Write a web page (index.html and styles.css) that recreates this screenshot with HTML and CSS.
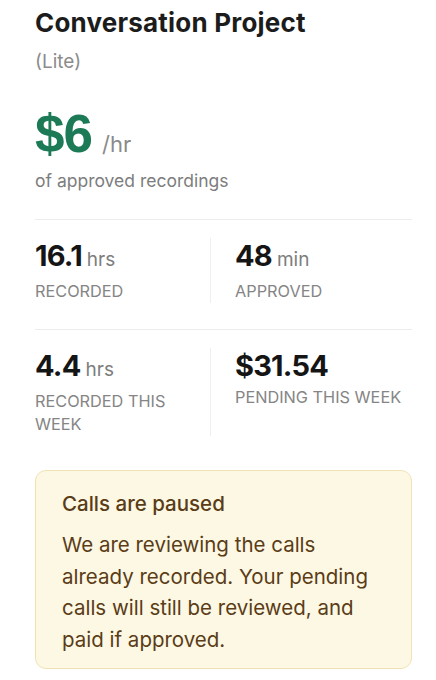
FILE: index.html
```html
<!DOCTYPE html>
<html>
<head>
    <title>Conversation Project</title>
    <link rel="stylesheet" href="styles.css">
</head>
<body>
    <div class="page">
        <h1 class="title">Conversation Project</h1>
        <div class="tier">(Lite)</div>

        <div class="rate">
            <span class="rate-value">$6</span>
            <span class="rate-unit">/hr</span>
        </div>
        <div class="rate-note">of approved recordings</div>

        <div class="stats">
            <div class="stat">
                <div class="stat-value">16.1<span class="unit">hrs</span></div>
                <div class="stat-label">RECORDED</div>
            </div>
            <div class="stat">
                <div class="stat-value">48<span class="unit">min</span></div>
                <div class="stat-label">APPROVED</div>
            </div>
        </div>

        <div class="stats last">
            <div class="stat">
                <div class="stat-value">4.4<span class="unit">hrs</span></div>
                <div class="stat-label">RECORDED THIS WEEK</div>
            </div>
            <div class="stat">
                <div class="stat-value">$31.54</div>
                <div class="stat-label">PENDING THIS WEEK</div>
            </div>
        </div>

        <div class="notice">
            <div class="notice-title">Calls are paused</div>
            <p class="notice-text">We are reviewing the calls already recorded. Your pending calls will still be reviewed, and paid if approved.</p>
        </div>
    </div>
</body>
</html>
```

FILE: styles.css
```css
body {
    margin: 0;
    background: #fff;
    font-family: Inter, "Open Sans", sans-serif;
    color: #1c1c1c;
}
.page {
    padding: 6px 24px 0 35px;
}
.title {
    font-size: 26px;
    font-weight: 700;
    line-height: 34px;
    margin: 0;
    letter-spacing: 0.2px;
}
.tier {
    font-size: 19px;
    line-height: 28px;
    color: #8c8c8c;
    margin-top: 8px;
}
.rate {
    margin-top: 33px;
    display: flex;
    align-items: baseline;
    gap: 10px;
    line-height: 50px;
}
.rate-value {
    font-family: "Liberation Sans", Arial, sans-serif;
    font-weight: 700;
    font-size: 53px;
    color: #1d7a57;
    letter-spacing: -1px;
}
.rate-unit {
    font-size: 22px;
    color: #8a8a8a;
}
.rate-note {
    font-size: 17.5px;
    color: #7d7d7d;
    line-height: 26px;
    margin-top: -1px;
    padding-bottom: 25px;
    border-bottom: 1px solid #ececec;
}
.stats {
    display: grid;
    grid-template-columns: 175px 1fr;
    padding: 18px 0 26px;
    border-bottom: 1px solid #ececec;
}
.stats.last {
    border-bottom: none;
}
.stat + .stat {
    border-left: 1px solid #efefef;
    padding-left: 24px;
}
.stat {
    padding-right: 10px;
}
.stat-value {
    font-size: 29px;
    font-weight: 700;
    line-height: 36px;
    letter-spacing: -0.8px;
    color: #151515;
}
.unit {
    font-size: 19px;
    font-weight: 400;
    color: #7d7d7d;
    letter-spacing: 0;
    margin-left: 5px;
}
.stat-label {
    font-size: 16.3px;
    line-height: 23px;
    color: #858585;
    margin-top: 2px;
}
.notice {
    margin-top: 8px;
    background: #fdf8e4;
    border: 1.5px solid #efe3b4;
    border-radius: 11px;
    padding: 19px 26px 13px;
    color: #5a3c17;
}
.notice-title {
    font-size: 20.5px;
    line-height: 28px;
    font-weight: 500;
}
.notice-text {
    margin: 11px 0 0;
    font-size: 20.5px;
    line-height: 31.5px;
}
```
